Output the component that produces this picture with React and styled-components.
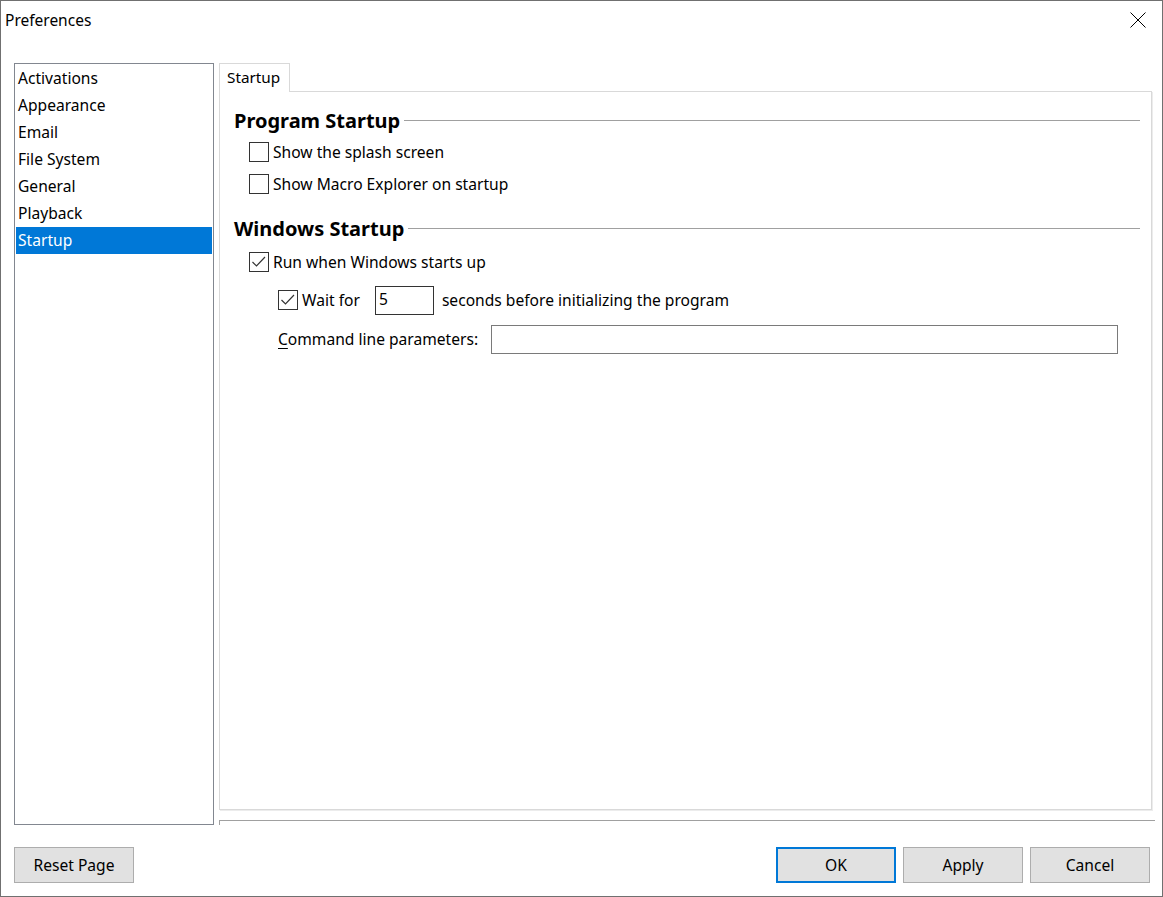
import React from "react";
import styled, { createGlobalStyle } from "styled-components";

const Global = createGlobalStyle`
  html, body { margin: 0; padding: 0; background: #ffffff; }
  body { font-family: "Noto Sans", "Open Sans", sans-serif; font-size: 15.6px; color: #000; }
  * { box-sizing: border-box; }
`;

const Window = styled.div`
  width: 1163px;
  height: 897px;
  border: 1px solid #707070;
  background: #fff;
  display: flex;
  flex-direction: column;
`;

const TitleBar = styled.div`
  height: 40px;
  display: flex;
  align-items: center;
  justify-content: space-between;
  padding: 0 16px 2px 4px;
`;

const Title = styled.span`
  font-size: 15.5px;
  color: #000;
`;

const CloseButton = styled.div`
  width: 16px;
  height: 16px;
  display: flex;
`;

const Main = styled.div`
  display: flex;
  gap: 5px;
  padding: 22px 7px 0 13px;
  height: 784px;
`;

const List = styled.div`
  width: 200px;
  height: 762px;
  border: 1px solid #828790;
  padding: 1px;
  display: flex;
  flex-direction: column;
`;

const ListItem = styled.div`
  height: 27px;
  line-height: 27px;
  padding-left: 2px;
  background: ${(p) => (p.$selected ? "#0078d7" : "transparent")};
  color: ${(p) => (p.$selected ? "#fff" : "#000")};
`;

const RightColumn = styled.div`
  flex: 1;
  display: flex;
  flex-direction: column;
`;

const TabStrip = styled.div`
  display: flex;
  height: 28px;
`;

const Tab = styled.div`
  width: 71px;
  height: 29px;
  border: 1px solid #d9d9d9;
  border-bottom: none;
  background: #fff;
  padding: 3px 0 0 7px;
  font-size: 15.3px;
  position: relative;
  z-index: 1;
`;

const Panel = styled.div`
  width: 933px;
  height: 719px;
  border: 1px solid #d9d9d9;
  box-shadow: 1px 1px 0 #ececec;
  padding: 13px 11px 0 14px;
  display: flex;
  flex-direction: column;
`;

const Heading = styled.div`
  display: flex;
  align-items: center;
  height: 30px;
  margin-top: ${(p) => p.$top || 0}px;
  font-weight: 700;
  font-size: 20px;
  gap: 4px;
  &::after {
    content: "";
    flex: 1;
    height: 1px;
    background: #a0a0a0;
    margin-top: 1px;
  }
`;

const Row = styled.div`
  display: flex;
  align-items: center;
  height: ${(p) => p.$h || 32}px;
  padding-left: ${(p) => p.$indent || 0}px;
`;

const Box = styled.span`
  width: 20px;
  height: 20px;
  border: 1px solid #333;
  background: #fff;
  display: inline-flex;
  margin-right: 4px;
  flex-shrink: 0;
`;

const Label = styled.span`
  white-space: nowrap;
`;

const TextBox = styled.div`
  width: ${(p) => p.$w}px;
  height: ${(p) => p.$hgt || 29}px;
  border: 1px solid ${(p) => p.$border || "#7a7a7a"};
  padding: 0 0 2px 3px;
  margin: 0 ${(p) => p.$mr || 0}px 0 ${(p) => p.$ml || 0}px;
  display: flex;
  align-items: center;
  background: #fff;
`;

const Underline = styled.span`
  text-decoration: underline;
  text-underline-offset: 3px;
`;

const Separator = styled.div`
  margin-top: 10px;
  height: 5px;
  border-top: 1px solid #a0a0a0;
  border-left: 1px solid #a0a0a0;
`;

const Footer = styled.div`
  display: flex;
  align-items: center;
  padding: 22px 12px 0 13px;
  gap: 7px;
`;

const Button = styled.div`
  width: 120px;
  height: 36px;
  background: #e1e1e1;
  border: ${(p) => (p.$default ? "2px solid #0078d7" : "1px solid #adadad")};
  display: flex;
  align-items: center;
  justify-content: center;
`;

const Spacer = styled.div`
  flex: 1;
`;

function Check({ checked }) {
  return (
    <Box>
      {checked && (
        <svg width="18" height="18" viewBox="0 0 18 18">
          <path d="M2.5 9 L6.5 13 L15 4" fill="none" stroke="#333" strokeWidth="1.2" />
        </svg>
      )}
    </Box>
  );
}

const items = ["Activations", "Appearance", "Email", "File System", "General", "Playback", "Startup"];

export default function App() {
  return (
    <>
      <Global />
      <Window>
        <TitleBar>
          <Title>Preferences</Title>
          <CloseButton>
            <svg width="16" height="16" viewBox="0 0 16 16">
              <path d="M0.5 0.5 L15.5 15.5 M15.5 0.5 L0.5 15.5" stroke="#000" strokeWidth="1" />
            </svg>
          </CloseButton>
        </TitleBar>
        <Main>
          <List>
            {items.map((t) => (
              <ListItem key={t} $selected={t === "Startup"}>
                {t}
              </ListItem>
            ))}
          </List>
          <RightColumn>
            <TabStrip>
              <Tab>Startup</Tab>
            </TabStrip>
            <Panel>
              <Heading>Program Startup</Heading>
              <Row $indent={15} $h={34}>
                <Check />
                <Label>Show the splash screen</Label>
              </Row>
              <Row $indent={15} $h={30}>
                <Check />
                <Label>Show Macro Explorer on startup</Label>
              </Row>
              <Heading $top={14}>Windows Startup</Heading>
              <Row $indent={15} $h={38}>
                <Check checked />
                <Label>Run when Windows starts up</Label>
              </Row>
              <Row $indent={44} $h={38}>
                <Check checked />
                <Label>Wait for</Label>
                <TextBox $w={59} $border="#333" $ml={15} $mr={8}>5</TextBox>
                <Label>seconds before initializing the program</Label>
              </Row>
              <Row $indent={44} $h={40}>
                <Label>
                  <Underline>C</Underline>ommand line parameters:
                </Label>
                <TextBox $w={627} $ml={13} />
              </Row>
            </Panel>
            <Separator />
          </RightColumn>
        </Main>
        <Footer>
          <Button>Reset Page</Button>
          <Spacer />
          <Button $default>OK</Button>
          <Button>Apply</Button>
          <Button>Cancel</Button>
        </Footer>
      </Window>
    </>
  );
}
